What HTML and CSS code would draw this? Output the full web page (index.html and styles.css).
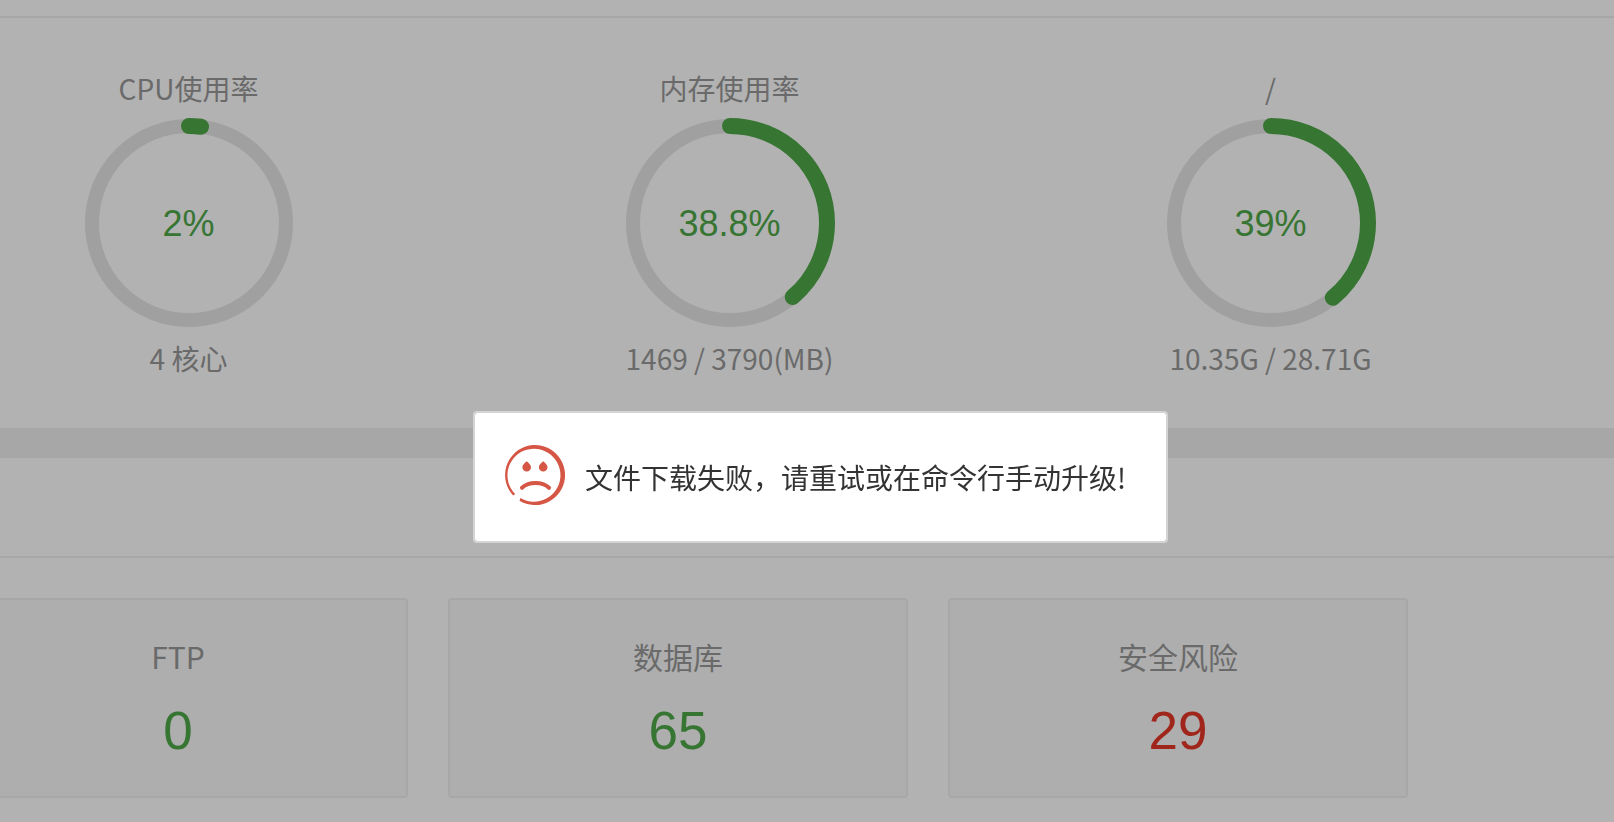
FILE: index.html
```
<!DOCTYPE html>
<html lang="zh-CN">
<head>
    <meta charset="UTF-8">
    <meta name="viewport" content="width=device-width, initial-scale=1.0">
    <title>首页</title>
    <link rel="stylesheet" href="styles.css">
</head>
<body>
    <div class="panel">
        <div class="panel-title panel-title-small"></div>
        <div class="gauges">
            <div class="gauge">
                <h3>CPU使用率</h3>
                <div class="ring">
                    <svg viewBox="0 0 210 210" aria-hidden="true">
                        <circle class="track" cx="105" cy="105" r="97"/>
                        <circle class="value" cx="105" cy="105" r="97" pathLength="100" stroke-dasharray="2 100"/>
                    </svg>
                    <span>2%</span>
                </div>
                <p>4 核心</p>
            </div>
            <div class="gauge">
                <h3>内存使用率</h3>
                <div class="ring">
                    <svg viewBox="0 0 210 210" aria-hidden="true">
                        <circle class="track" cx="105" cy="105" r="97"/>
                        <circle class="value" cx="105" cy="105" r="97" pathLength="100" stroke-dasharray="38.8 100"/>
                    </svg>
                    <span>38.8%</span>
                </div>
                <p>1469 / 3790(MB)</p>
            </div>
            <div class="gauge">
                <h3>/</h3>
                <div class="ring">
                    <svg viewBox="0 0 210 210" aria-hidden="true">
                        <circle class="track" cx="105" cy="105" r="97"/>
                        <circle class="value" cx="105" cy="105" r="97" pathLength="100" stroke-dasharray="39 100"/>
                    </svg>
                    <span>39%</span>
                </div>
                <p>10.35G / 28.71G</p>
            </div>
        </div>
    </div>

    <div class="panel">
        <div class="panel-title"></div>
        <div class="cards">
            <div class="card">
                <h3>FTP</h3>
                <a href="#">0</a>
            </div>
            <div class="card">
                <h3>数据库</h3>
                <a href="#">65</a>
            </div>
            <div class="card">
                <h3>安全风险</h3>
                <a href="#" class="danger">29</a>
            </div>
        </div>
    </div>

    <!-- Message box -->
    <div class="overlay">
        <div class="message" role="alertdialog" aria-labelledby="message-text">
            <svg class="face" viewBox="0 0 60 60" aria-hidden="true">
                <path class="outline" d="M14.500 55.700A30 30 0 1 0 8.200 50.600L10.200 49A26.500 26.500 0 1 1 15.500 53.100Z"/>
                <path class="eye" d="M21.700 16.200C23 17.500 26 19.500 26 22.300A4.300 4.300 0 0 1 17.400 22.300C17.400 19.500 20.400 17.500 21.700 16.200Z"/>
                <path class="eye" d="M38.200 16.200C39.500 17.500 42.500 19.500 42.500 22.300A4.300 4.300 0 0 1 33.900 22.300C33.900 19.500 36.900 17.500 38.200 16.200Z"/>
                <path class="mouth" d="M17 42.800C24 36.500 37 36.500 44 42.800"/>
            </svg>
            <p id="message-text">文件下载失败，请重试或在命令行手动升级!</p>
        </div>
    </div>
</body>
</html>
```

FILE: styles.css
```
/* General styles */
* {
    box-sizing: border-box;
}
body {
    font-family: "Noto Sans CJK SC", sans-serif;
    margin: 0;
    background-color: #f0f0f0;
    color: #999;
    overflow-x: hidden;
}
h3, p {
    margin: 0;
    font-weight: normal;
}
.panel {
    background-color: #fff;
}
.panel + .panel {
    margin-top: 30px;
}
.panel-title {
    height: 100px;
    border-bottom: 2px solid #f0f0f0;
}
.panel-title-small {
    height: 18px;
}

/* Usage rings */
.gauges {
    display: grid;
    grid-template-columns: repeat(3, 1fr);
    margin-left: -82px;
    padding: 50px 73px 50px 0;
}
.gauge {
    display: flex;
    flex-direction: column;
    align-items: center;
    line-height: 40px;
}
.gauge h3, .gauge p {
    font-size: 28px;
}
.ring {
    display: grid;
    place-items: center;
    margin: 10px 0;
}
.ring svg, .ring span {
    grid-area: 1 / 1;
}
.ring svg {
    width: 210px;
    height: 210px;
    transform: rotate(-90deg);
}
.ring circle {
    fill: none;
}
.ring .track {
    stroke: #e5e5e5;
    stroke-width: 14px;
}
.ring .value {
    stroke: #50a84a;
    stroke-width: 16px;
    stroke-linecap: round;
}
.ring span {
    padding-top: 2px;
    font-family: "Liberation Sans", Arial, sans-serif;
    font-size: 36px;
    color: #50a84a;
}

/* Overview cards */
.cards {
    display: grid;
    grid-template-columns: repeat(3, 1fr);
    gap: 40px;
    margin-left: -52px;
    padding: 40px 206px 24px 0;
}
.card {
    display: flex;
    flex-direction: column;
    align-items: center;
    gap: 25px;
    padding: 36px 0 35px;
    background-color: #f9f9f9;
    border: 2px solid #f0f0f0;
    border-radius: 4px;
}
.card h3 {
    font-size: 30px;
    line-height: 40px;
}
.card a {
    font-family: "Liberation Sans", Arial, sans-serif;
    font-size: 53px;
    line-height: 60px;
    color: #50a84a;
    text-decoration: none;
}
.card a.danger {
    color: #e53527;
}

/* Message box */
.overlay {
    position: fixed;
    inset: 0;
    display: flex;
    align-items: center;
    justify-content: center;
    padding: 132px 0 0 27px;
    background-color: rgba(0, 0, 0, 0.3);
}
.message {
    display: flex;
    align-items: flex-start;
    gap: 20px;
    padding: 32px 40px 36px 30px;
    background-color: #fff;
    background-clip: padding-box;
    border: 2px solid #d4d4d4;
    border-radius: 4px;
    color: #333;
}
.message p {
    padding-top: 12px;
    font-size: 28px;
    line-height: 40px;
}
.face {
    width: 60px;
    height: 60px;
}
.face .outline, .face .eye {
    fill: #d65645;
}
.face .mouth {
    fill: none;
    stroke: #d65645;
    stroke-width: 4px;
    stroke-linecap: round;
}
```
